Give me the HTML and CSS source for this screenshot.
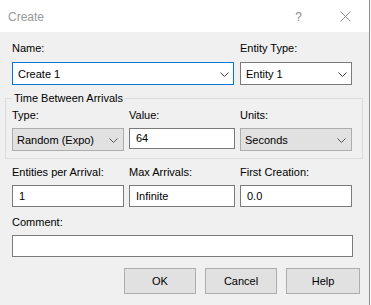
FILE: index.html
```html
<!DOCTYPE html>
<html>
<head>
    <title>Create</title>
    <meta charset="utf-8">
    <link rel="stylesheet" href="styles.css">
</head>
<body>
    <div class="dialog">
        <div class="titlebar">
            <span class="title">Create</span>
            <span class="help-icon">?</span>
            <svg class="close-icon" width="11" height="11" viewBox="0 0 11 11">
                <path d="M0.5 0.5 L10.5 10.5 M10.5 0.5 L0.5 10.5" stroke="#8a8a8a" stroke-width="1" fill="none"/>
            </svg>
        </div>

        <div class="content">
            <div class="grid row-name">
                <div class="field span-2">
                    <div class="label">Name:</div>
                    <div class="combo focused">
                        <span>Create 1</span>
                        <svg class="chev" width="9" height="5" viewBox="0 0 9 5"><polyline points="0.5,0.5 4.5,4.5 8.5,0.5" stroke="#444" fill="none"/></svg>
                    </div>
                </div>
                <div class="field">
                    <div class="label">Entity Type:</div>
                    <div class="combo">
                        <span>Entity 1</span>
                        <svg class="chev" width="9" height="5" viewBox="0 0 9 5"><polyline points="0.5,0.5 4.5,4.5 8.5,0.5" stroke="#444" fill="none"/></svg>
                    </div>
                </div>
            </div>

            <fieldset class="group">
                <legend>Time Between Arrivals</legend>
                <div class="grid">
                    <div class="field">
                        <div class="label">Type:</div>
                        <div class="combo flat">
                            <span>Random (Expo)</span>
                            <svg class="chev" width="9" height="5" viewBox="0 0 9 5"><polyline points="0.5,0.5 4.5,4.5 8.5,0.5" stroke="#555" fill="none"/></svg>
                        </div>
                    </div>
                    <div class="field">
                        <div class="label">Value:</div>
                        <div class="textbox short">64</div>
                    </div>
                    <div class="field">
                        <div class="label">Units:</div>
                        <div class="combo flat">
                            <span>Seconds</span>
                            <svg class="chev" width="9" height="5" viewBox="0 0 9 5"><polyline points="0.5,0.5 4.5,4.5 8.5,0.5" stroke="#555" fill="none"/></svg>
                        </div>
                    </div>
                </div>
            </fieldset>

            <div class="grid row-counts">
                <div class="field">
                    <div class="label">Entities per Arrival:</div>
                    <div class="textbox">1</div>
                </div>
                <div class="field">
                    <div class="label">Max Arrivals:</div>
                    <div class="textbox">Infinite</div>
                </div>
                <div class="field">
                    <div class="label">First Creation:</div>
                    <div class="textbox">0.0</div>
                </div>
            </div>

            <div class="row-comment">
                <div class="label">Comment:</div>
                <div class="textbox"></div>
            </div>

            <div class="buttons">
                <div class="btn">OK</div>
                <div class="btn">Cancel</div>
                <div class="btn wide">Help</div>
            </div>
        </div>
    </div>
</body>
</html>
```

FILE: styles.css
```css
body {
    margin: 0;
    background: #f7f7f7;
    font-family: "Liberation Sans", Arial, sans-serif;
    font-size: 11px;
    color: #000;
}
.dialog {
    width: 369px;
    height: 305px;
    background: #f0f0f0;
    border-right: 1px solid #8e8e8e;
}
.titlebar {
    height: 32px;
    background: #fff;
    display: flex;
    align-items: center;
    padding-left: 8px;
}
.title {
    font-size: 12px;
    color: #999;
    flex: 1;
    margin-top: 1px;
}
.help-icon {
    font-size: 12px;
    color: #8a8a8a;
    margin-right: 38px;
    margin-top: 1px;
}
.close-icon {
    margin-right: 18px;
    margin-top: 1px;
}
.content {
    width: 358px;
    padding-left: 5px;
}
.grid {
    display: grid;
    grid-template-columns: 112px 106px 112px;
    column-gap: 5px;
    align-items: start;
}
.row-name {
    padding-left: 7px;
    margin-top: 10px;
}
.span-2 {
    grid-column: span 2;
}
.span-2 .combo {
    width: 222px;
}
.label {
    line-height: 13px;
    height: 13px;
    margin-bottom: 7px;
}
.combo {
    box-sizing: border-box;
    height: 23px;
    background: #fff;
    border: 1px solid #7a7a7a;
    display: flex;
    align-items: center;
    justify-content: space-between;
    padding: 0 4px 0 5px;
}
.combo.focused {
    border-color: #0078d7;
}
.combo.flat {
    background: #e1e1e1;
    border-color: #adadad;
    padding-left: 4px;
    padding-right: 5px;
}
.chev {
    display: block;
    margin-top: 1px;
}
.textbox {
    box-sizing: border-box;
    height: 22px;
    background: #fff;
    border: 1px solid #7a7a7a;
    line-height: 20px;
    padding-left: 6px;
}
.textbox.short {
    height: 21px;
    line-height: 19px;
}
.group {
    margin: 7px 0 0 0;
    padding: 0 0 7px 6px;
    border: 1px solid #dcdcdc;
    min-width: 0;
}
.group legend {
    padding: 0 2px;
    line-height: 13px;
}
.group .grid {
    margin-top: 4px;
}
.group .label {
    margin-bottom: 6px;
}
.row-counts {
    padding-left: 7px;
    margin-top: 7px;
}
.row-counts .label {
    margin-bottom: 6px;
}
.row-comment {
    padding-left: 7px;
    margin-top: 9px;
}
.row-comment .label {
    margin-bottom: 6px;
}
.row-comment .textbox {
    width: 341px;
}
.buttons {
    display: flex;
    gap: 9px;
    margin-top: 11px;
    padding-left: 119px;
}
.btn {
    box-sizing: border-box;
    width: 72px;
    height: 26px;
    background: #e1e1e1;
    border: 1px solid #adadad;
    text-align: center;
    line-height: 24px;
}
.btn.wide {
    width: 74px;
}
```
